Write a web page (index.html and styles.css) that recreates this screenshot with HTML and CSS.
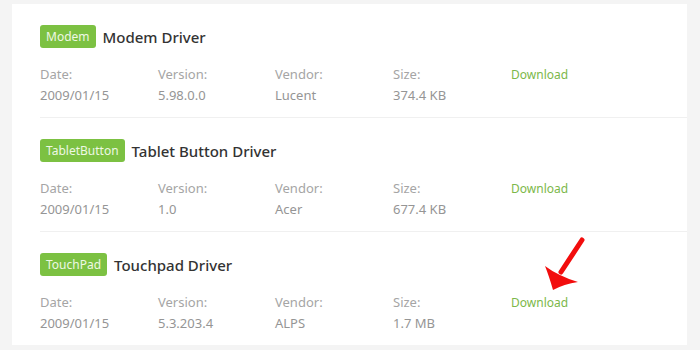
FILE: index.html
```html
<!DOCTYPE html>
<html lang="en">
<head>
    <meta charset="UTF-8">
    <title>Drivers</title>
    <link rel="stylesheet" href="styles.css">
</head>
<body>
<div class="driver-list">
    <div class="driver">
        <div class="driver-head">
            <span class="tag">Modem</span>
            <h3>Modem Driver</h3>
        </div>
        <div class="meta">
            <div><span class="label">Date:</span><span class="value">2009/01/15</span></div>
            <div><span class="label">Version:</span><span class="value">5.98.0.0</span></div>
            <div><span class="label">Vendor:</span><span class="value">Lucent</span></div>
            <div><span class="label">Size:</span><span class="value">374.4 KB</span></div>
            <div><a href="#" class="download">Download</a></div>
        </div>
    </div>
    <div class="driver">
        <div class="driver-head">
            <span class="tag">TabletButton</span>
            <h3>Tablet Button Driver</h3>
        </div>
        <div class="meta">
            <div><span class="label">Date:</span><span class="value">2009/01/15</span></div>
            <div><span class="label">Version:</span><span class="value">1.0</span></div>
            <div><span class="label">Vendor:</span><span class="value">Acer</span></div>
            <div><span class="label">Size:</span><span class="value">677.4 KB</span></div>
            <div><a href="#" class="download">Download</a></div>
        </div>
    </div>
    <div class="driver">
        <div class="driver-head">
            <span class="tag">TouchPad</span>
            <h3>Touchpad Driver</h3>
        </div>
        <div class="meta">
            <div><span class="label">Date:</span><span class="value">2009/01/15</span></div>
            <div><span class="label">Version:</span><span class="value">5.3.203.4</span></div>
            <div><span class="label">Vendor:</span><span class="value">ALPS</span></div>
            <div><span class="label">Size:</span><span class="value">1.7 MB</span></div>
            <div><a href="#" class="download">Download</a></div>
        </div>
    </div>

    <!-- red pointer drawn over the last download link -->
    <svg class="arrow" width="50" height="62" viewBox="0 0 50 62">
        <line x1="42" y1="6" x2="21" y2="38" stroke="#f20d0d" stroke-width="5" stroke-linecap="round"/>
        <path d="M13 56 Q9 42 5 32 Q13 38 20 41 Q28 45 38 48 Q24 50 13 56 Z" fill="#f20d0d"/>
    </svg>
</div>
</body>
</html>
```

FILE: styles.css
```css
body {
    margin: 0;
    padding: 4px 13px 5px 12px;
    background-color: #f4f4f4;
    font-family: "Noto Sans", sans-serif;
}

.driver-list {
    position: relative;
    background-color: #fff;
}

.driver {
    margin-left: 28px;
    padding: 21px 0 11px;
    border-bottom: 1px solid #f0f0f0;
}

.driver:last-of-type {
    border-bottom: none;
}

.driver-head {
    display: flex;
    align-items: center;
    height: 23px;
}

.tag {
    background-color: #7cc142;
    color: #eef8e4;
    font-size: 12px;
    line-height: 23px;
    padding: 0 6px;
    border-radius: 3px;
}

.driver-head h3 {
    margin: 0 0 0 7px;
    font-size: 15px;
    font-weight: 500;
    color: #333;
}

.meta {
    display: grid;
    grid-template-columns: 118px 117px 118px 118px 118px;
    margin-top: 16px;
    font-size: 13px;
    line-height: 21px;
}

.label, .value {
    display: block;
    color: #a5a5a5;
}

.value {
    color: #959595;
}

.download {
    color: #7cb84a;
    font-size: 12px;
    text-decoration: none;
}

.arrow {
    position: absolute;
    left: 528px;
    top: 230px;
}
```
